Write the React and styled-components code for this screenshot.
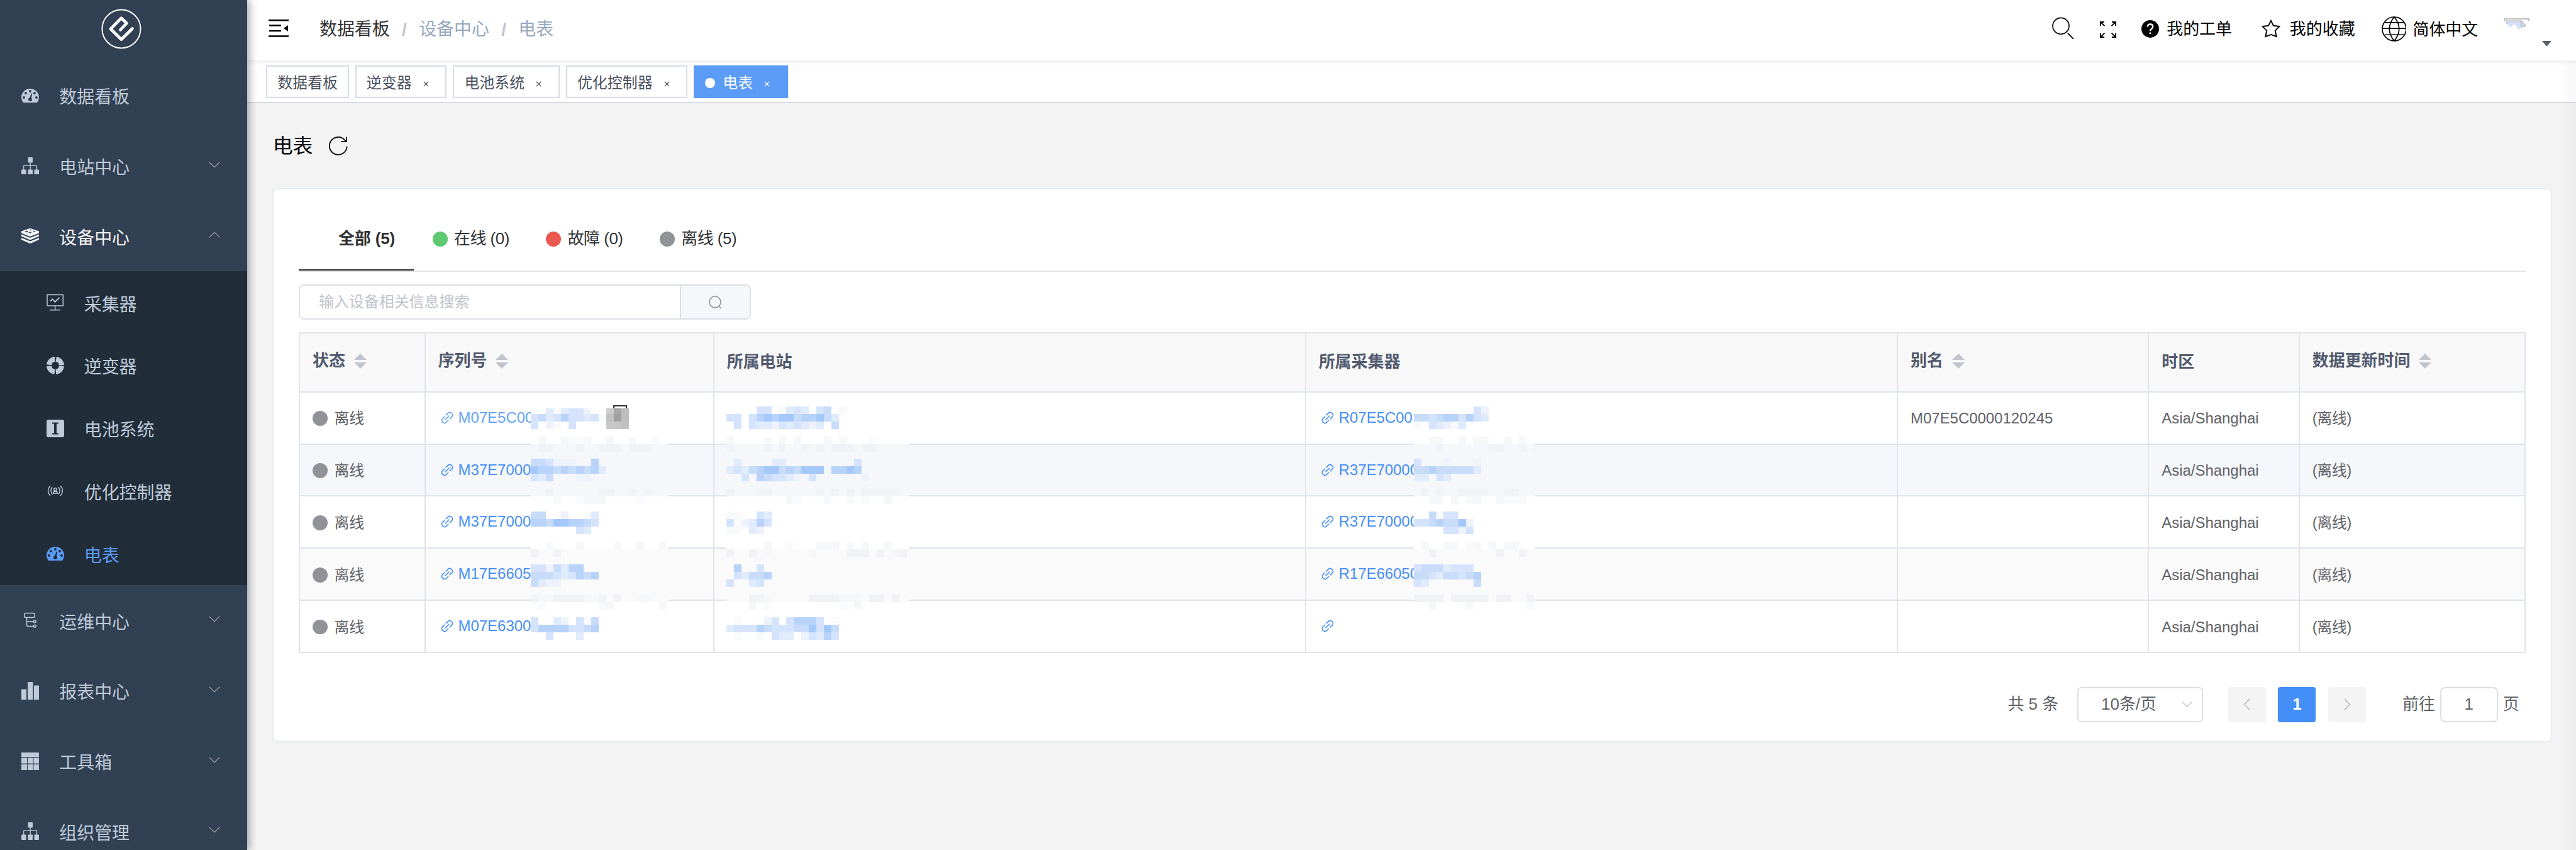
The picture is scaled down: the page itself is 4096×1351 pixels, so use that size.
import React from 'react';
import styled, { createGlobalStyle, css } from 'styled-components';

const SCALE = 4096 / 4104;
const r = (n) => `${(n * SCALE).toFixed(3)}px`;

const GlobalStyle = createGlobalStyle`
  *, *::before, *::after { box-sizing: border-box; }
  html, body { margin: 0; padding: 0; }
  body {
    background: #f3f3f3;
    font-family: "Liberation Sans", "Noto Sans CJK SC", sans-serif;
    color: #606266;
    overflow: hidden;
  }
`;

/* ---------- shell ---------- */
const Shell = styled.div`
  position: relative;
  display: flex;
  width: 100vw;
  height: 100vh;
  overflow: hidden;
  background: #f3f3f3;
`;
const EdgeShade = styled.div`
  position: absolute;
  top: 0;
  right: 0;
  width: 28px;
  height: 100%;
  pointer-events: none;
  background: linear-gradient(to right, rgba(0, 0, 0, 0), rgba(0, 0, 0, 0.03));
`;
const Main = styled.main`
  flex: 1;
  min-width: 0;
  display: flex;
  flex-direction: column;
`;

/* ---------- sidebar ---------- */
const Sidebar = styled.aside`
  position: relative;
  z-index: 2;
  flex: none;
  width: ${r(394)};
  height: 100%;
  overflow: visible;
  background: #324054;
  box-shadow: 4px 0 12px rgba(0, 21, 41, 0.35);
`;
const LogoBox = styled.div`
  height: ${r(96)};
  display: flex;
  justify-content: center;
  padding: ${r(14)} ${r(7)} 0 0;
`;
const MenuItem = styled.div`
  display: flex;
  align-items: center;
  height: ${(p) => (p.$sub ? r(100) : r(112))};
  padding: 0 ${r(43)} 0 ${(p) => (p.$sub ? r(74) : r(34))};
  color: ${(p) => p.$color || '#bfcbd9'};
  font-size: ${r(28)};
  white-space: nowrap;
`;
const MenuIcon = styled.span`
  display: flex;
  flex: none;
  width: ${r(28)};
  height: ${r(28)};
  margin-right: ${(p) => (p.$sub ? r(32) : r(32.5))};
`;
const MenuLabel = styled.span`
  flex: 1;
  padding-top: ${r(7)};
  line-height: 1;
`;
const SubMenu = styled.div`
  background: #222d3a;
`;
const Chevron = styled.svg`
  flex: none;
  width: ${r(18)};
  height: ${r(10)};
  margin-top: ${r(-4)};
  transform: ${(p) => (p.$up ? 'rotate(180deg)' : 'none')};
`;

/* ---------- navbar ---------- */
const Navbar = styled.header`
  position: relative;
  z-index: 1;
  flex: none;
  display: flex;
  align-items: flex-start;
  height: ${r(96)};
  padding-left: ${r(34)};
  background: #fff;
  box-shadow: 0 2px 8px rgba(0, 21, 41, 0.08);
`;
const Hamburger = styled.svg`
  flex: none;
  width: ${r(32)};
  height: ${r(28)};
  margin-top: ${r(31)};
`;
const Breadcrumb = styled.nav`
  flex: 1;
  display: flex;
  align-items: center;
  height: ${r(94)};
  margin-left: ${r(49)};
  font-size: ${r(28)};
  line-height: 1;
`;
const Crumb = styled.span`
  color: ${(p) => (p.$root ? '#303133' : '#97a8be')};
`;
const CrumbSlash = styled.span`
  width: ${r(46.5)};
  text-align: center;
  font-weight: 700;
  color: #c0c4cc;
`;
const NavTools = styled.div`
  flex: none;
  display: flex;
  align-items: flex-start;
  width: ${r(835)};
  color: #000;
  font-size: ${r(26)};
  line-height: 1;
`;
const ToolIcon = styled.svg`
  flex: none;
  display: block;
  width: ${(p) => r(p.$w)};
  height: ${(p) => r(p.$h)};
  margin: ${(p) => r(p.$top)} 0 0 ${(p) => r(p.$left || 0)};
`;
const ToolText = styled.span`
  flex: none;
  width: ${r(104)};
  white-space: nowrap;
  margin: ${(p) => r(p.$top)} 0 0 ${(p) => r(p.$left)};
`;

/* ---------- opened page tags ---------- */
const TagBar = styled.div`
  flex: none;
  display: flex;
  gap: ${r(10)};
  height: ${r(68)};
  padding: ${r(8)} 0 0 ${r(30)};
  background: #fff;
  border-bottom: 2px solid #d8dce5;
`;
const Tag = styled.div`
  display: flex;
  align-items: center;
  height: ${r(52)};
  padding: 0 ${(p) => (p.$closable ? r(27) : r(16))} 0 ${r(16)};
  border: 2px solid ${(p) => (p.$active ? '#5a9cf8' : '#d8dce5')};
  background: ${(p) => (p.$active ? '#5a9cf8' : '#fff')};
  color: ${(p) => (p.$active ? '#fff' : '#495060')};
  font-size: ${r(24)};
  line-height: 1;
  white-space: nowrap;
`;
const TagDot = styled.i`
  width: ${r(16)};
  height: ${r(16)};
  margin: ${r(4)} ${r(12)} 0 0;
  border-radius: 50%;
  background: #fff;
`;
const TagLabel = styled.span`
  padding-top: ${r(4)};
`;
const TagClose = styled.svg`
  width: ${r(9)};
  height: ${r(9)};
  margin: ${r(7)} 0 0 ${r(18)};
`;

/* ---------- page ---------- */
const TitleRow = styled.div`
  display: flex;
  align-items: flex-start;
  height: ${r(136)};
  padding: ${r(53)} 0 0 ${r(40.5)};
`;
const Title = styled.h1`
  margin: 0;
  font-size: ${r(32)};
  line-height: 1;
  font-weight: 400;
  color: #000;
  width: ${r(64)};
`;
const Card = styled.section`
  width: ${r(3632)};
  height: ${r(882)};
  margin-left: ${r(40)};
  padding: ${r(30)} ${r(40)};
  border: 2px solid #e6ebf3;
  border-radius: 8px;
  background: #fff;
`;
const Tabs = styled.div`
  display: flex;
  gap: ${r(2)};
  height: ${r(101)};
  border-bottom: 2px solid #e4e4e4;
`;
const Tab = styled.div`
  display: flex;
  align-items: center;
  width: ${(p) => (p.$active ? r(183) : r(179))};
  padding-left: ${(p) => (p.$active ? r(63) : r(28))};
  border-bottom: 2px solid ${(p) => (p.$active ? '#303133' : 'transparent')};
  color: #303133;
  font-size: ${r(26)};
  font-weight: ${(p) => (p.$active ? 700 : 400)};
  letter-spacing: ${(p) => (p.$active ? '-0.1px' : '-0.5px')};
  line-height: 1;
  white-space: nowrap;
`;
const Dot = styled.i`
  flex: none;
  width: ${r(24)};
  height: ${r(24)};
  margin-right: ${r(10.5)};
  border-radius: 50%;
  background: ${(p) => p.$color};
`;
const SearchBox = styled.div`
  display: flex;
  width: ${r(720)};
  height: ${r(56)};
  margin-top: ${r(20)};
  border: 2px solid #dcdfe6;
  border-radius: 8px;
  overflow: hidden;
`;
const SearchInput = styled.div`
  flex: 1;
  display: flex;
  align-items: center;
  padding-left: ${r(30)};
  color: #c0c4cc;
  font-size: ${r(24)};
  line-height: 1;
`;
const SearchButton = styled.div`
  display: flex;
  align-items: center;
  justify-content: center;
  width: ${r(111)};
  border-left: 2px solid #dcdfe6;
  background: #f5f7fa;
`;

/* ---------- table ---------- */
const lineColor = '#dfe4ec';
const Table = styled.div`
  margin-top: ${r(20)};
  border-top: 2px solid ${lineColor};
  border-left: 2px solid ${lineColor};
`;
const rowGrid = css`
  display: grid;
  grid-template-columns: ${[200, 460, 943, 943, 400, 240, 360].map(r).join(' ')};
`;
const HeadRow = styled.div`
  ${rowGrid}
  height: ${r(94)};
  background: #f8f8f9;
`;
const HeadCell = styled.div`
  display: flex;
  align-items: center;
  padding: 0 0 ${(p) => (p.$sortable ? r(4) : '0px')} ${r(20)};
  border-right: 2px solid ${lineColor};
  border-bottom: 2px solid ${lineColor};
  color: #515a6e;
  font-size: ${r(26)};
  font-weight: 700;
  line-height: 1;
  white-space: nowrap;
`;
const SortIcon = styled.svg`
  width: ${r(20)};
  height: ${r(24)};
  margin-left: ${r(14)};
`;
const Body = styled.div`
  position: relative;
`;
const Row = styled.div`
  ${rowGrid}
  height: ${r(83)};
  background: ${(p) => p.$bg};
`;
const Cell = styled.div`
  display: flex;
  align-items: center;
  min-width: 0;
  padding: ${r(2)} 0 0 ${r(20)};
  border-right: 2px solid ${lineColor};
  border-bottom: 2px solid ${lineColor};
  color: #606266;
  font-size: ${r(24)};
  line-height: ${r(30)};
  letter-spacing: ${(p) => (p.$tight ? '-0.5px' : 'normal')};
  white-space: nowrap;
`;
const LinkCell = styled(Cell)`
  padding: 0 0 ${r(1)} ${r(24)};
  color: ${(p) => (p.$hover ? '#62a3f8' : '#448ef7')};
`;
const LinkText = styled.span`
  margin-left: ${r(8)};
`;
const MosaicLayer = styled.div`
  position: absolute;
  left: ${(p) => r(p.$left)};
  top: ${(p) => r(22 + p.$trim)};
  display: grid;
  grid-template-columns: repeat(${(p) => p.$cols}, ${r(12)});
  grid-template-rows: ${(p) => r(12 - p.$trim)};
  grid-auto-rows: ${r(12)};
  width: ${(p) => r(p.$width)};
  overflow: hidden;
`;
const Tile = styled.i`
  background: ${(p) => p.$color};
`;
const CopyHandle = styled.div`
  position: absolute;
  left: ${r(499)};
  top: ${r(20)};
  width: ${r(22)};
  height: ${r(5)};
  border: 2px solid #303133;
  border-bottom: 0;
`;

/* ---------- pagination ---------- */
const Pagination = styled.div`
  display: flex;
  align-items: center;
  justify-content: flex-end;
  height: ${r(56)};
  margin-top: ${r(54)};
  padding-right: ${r(10.5)};
  font-size: ${r(26)};
  line-height: 1;
  color: #606266;
  white-space: nowrap;
`;
const PageSize = styled.div`
  display: flex;
  align-items: center;
  justify-content: space-between;
  width: ${r(200)};
  height: ${r(56)};
  margin: 0 ${r(40)} 0 ${r(30)};
  padding: 0 ${r(15)} 0 ${r(36)};
  border: 2px solid #dcdfe6;
  border-radius: 6px;
`;
const PageButton = styled.div`
  display: flex;
  align-items: center;
  justify-content: center;
  width: ${r(60)};
  height: ${r(56)};
  margin-right: ${(p) => (p.$last ? r(58) : r(20))};
  border-radius: 4px;
  background: ${(p) => (p.$active ? '#448ef7' : '#f4f4f5')};
  color: #fff;
  font-weight: 700;
`;
const PageInput = styled.div`
  display: flex;
  align-items: center;
  justify-content: center;
  width: ${r(92)};
  height: ${r(56)};
  margin: 0 ${r(8)};
  border: 2px solid #dcdfe6;
  border-radius: 8px;
`;

/* ---------- icons (28-unit boxes) ---------- */
const Svg28 = ({ children }) => (
  <svg viewBox="0 0 28 28" width="100%" height="100%" fill="none">{children}</svg>
);
const Gauge = ({ hole }) => (
  <Svg28>
    <path d="M2.6 24.6Q0 20.500 0 17A14 14 0 0 1 28 17Q28 20.500 25.400 24.600Q25 25 24.500 25H3.500Q3 25 2.600 24.600Z" fill="currentColor" />
    <g fill={hole}>
      <circle cx="14" cy="7" r="2" />
      <circle cx="7" cy="10" r="2" />
      <circle cx="21" cy="10" r="2" />
      <circle cx="4" cy="17" r="2" />
      <circle cx="24" cy="17" r="2" />
      <circle cx="14" cy="20" r="3" />
      <path d="M12.800 18.500L15.800 10.500L17.300 11L15.600 19Z" />
    </g>
  </Svg28>
);
const Sitemap = () => (
  <Svg28>
    <g fill="currentColor">
      <rect x="10.500" y="0" width="7.500" height="8.500" rx="1" />
      <rect x="0" y="19.500" width="7.500" height="8.500" rx="1" />
      <rect x="10.500" y="19.500" width="7.500" height="8.500" rx="1" />
      <rect x="20.500" y="19.500" width="7.500" height="8.500" rx="1" />
    </g>
    <path d="M14.200 8V20M3.700 20V13.500H24.500V20" stroke="currentColor" strokeWidth="1.300" />
  </Svg28>
);
const Stack = ({ hole }) => (
  <Svg28>
    <g fill="currentColor">
      <path d="M0 6.500L12.500 2.200Q14 1.700 15.500 2.200L28 6.500V9.500L15.500 14.600Q14 15.200 12.500 14.600L0 9.500Z" />
      <path d="M0 11.500L12.500 16.600Q14 17.200 15.500 16.600L28 11.500V14.600L15.500 19.800Q14 20.400 12.500 19.800L0 14.600Z" />
      <path d="M0 17L12.500 22Q14 22.600 15.500 22L28 17V20L15.500 25.500Q14 26.200 12.500 25.500L0 20Z" />
    </g>
    <g fill={hole}>
      <path d="M10.500 8.200L14.500 9.800L17 7.500L13 8.300ZM12.500 3.800L14 4.200L15.500 3.600L16 5L14 5.600Z" />
      <ellipse cx="8.500" cy="7.200" rx="2.800" ry="1" />
      <path d="M18.500 6.500L23 5.700L20.500 8Z" />
    </g>
  </Svg28>
);
const Monitor = () => (
  <Svg28>
    <g stroke="currentColor" strokeWidth="1.500">
      <path d="M1 1.500H26.300V19H1ZM13.700 19V25M5 25.700H22" />
      <path d="M6 11.500L9.500 8.500L13.500 13L20.500 6" strokeWidth="1.800" />
    </g>
  </Svg28>
);
const Ring = () => (
  <Svg28>
    <circle cx="14" cy="14" r="10" stroke="currentColor" strokeWidth="8" strokeDasharray="13.700 2.008" strokeDashoffset="-1" />
  </Svg28>
);
const BatteryBox = ({ hole }) => (
  <Svg28>
    <rect width="28" height="28" rx="3" fill="currentColor" />
    <path d="M9 4.500H19V6.500H16V21.500H19V23.500H9V21.500H12V6.500H9Z" fill={hole} />
  </Svg28>
);
const Signal = () => (
  <Svg28>
    <g stroke="currentColor" strokeWidth="1.400" strokeLinecap="round">
      <path d="M5.500 6.500Q-0.500 14 5.500 21.500M8.800 8.500Q5 14 8.800 19.500M22.500 6.500Q28.500 14 22.500 21.500M19.200 8.500Q23 14 19.200 19.500" />
      <circle cx="14" cy="12" r="2.200" />
      <path d="M10.500 18Q11 14.800 14 14.800Q17 14.800 17.500 18Z" />
    </g>
  </Svg28>
);
const Flow = () => (
  <Svg28>
    <g stroke="currentColor" strokeWidth="1.500">
      <rect x="4.700" y="2.500" width="16.500" height="7" rx="2.500" />
      <path d="M8.500 9.500V21Q8.500 23.500 11 23.500H19M8.500 15.800H19" />
      <circle cx="21.300" cy="15.800" r="1.900" />
      <circle cx="21.300" cy="23.200" r="1.900" />
    </g>
  </Svg28>
);
const Bars = () => (
  <Svg28>
    <path d="M0 11.500H8V28H0ZM10 0H18.300V28H10ZM20 5.500H28V28H20Z" fill="currentColor" />
  </Svg28>
);
const GridIcon = () => (
  <Svg28>
    <path d="M0 0H28V7H0ZM0 8.300H9V17.500H0ZM10 8.300H18.500V17.500H10ZM19.500 8.300H28V17.500H19.500ZM0 18.800H9V28H0ZM10 18.800H18.500V28H10ZM19.500 18.800H28V28H19.500Z" fill="currentColor" />
  </Svg28>
);
const Logo = styled.svg`
  width: ${r(64)};
  height: ${r(64)};
`;
const LinkIcon = styled.svg`
  flex: none;
  width: ${r(20)};
  height: ${r(20)};
`;
const SmallIcon = styled.svg`
  flex: none;
  width: ${(p) => r(p.$w)};
  height: ${(p) => r(p.$h)};
`;
const RefreshIcon = styled.svg`
  width: ${r(30)};
  height: ${r(30)};
  margin-left: ${r(25.5)};
`;

const Arrow = ({ up }) => (
  <Chevron viewBox="0 0 18 10" $up={up}>
    <path d="M0.700 0.700L9 8.800L17.300 0.700" fill="none" stroke="#909399" strokeWidth="1.500" />
  </Chevron>
);
const ChainLink = () => (
  <LinkIcon viewBox="0 0 20 20" fill="none" stroke="currentColor" strokeWidth="1.600" strokeLinecap="round">
    <path d="M7 13L13 7M8.300 5.700L11.600 2.400Q14 0 17 2.800Q20 6 17.600 8.400L14.300 11.700M11.700 14.300L8.400 17.600Q6 20 3 17.200Q0 14 2.400 11.600L5.700 8.300" />
  </LinkIcon>
);

/* ---------- data ---------- */
const MAIN_BG = '#324054';
const SUB_BG = '#222d3a';

const menuTop = [
  { label: '数据看板', icon: <Gauge hole={MAIN_BG} /> },
  { label: '电站中心', icon: <Sitemap />, arrow: 'down' },
  { label: '设备中心', icon: <Stack hole={MAIN_BG} />, arrow: 'up', color: '#f4f4f5' },
];
const subMenu = [
  { label: '采集器', icon: <Monitor /> },
  { label: '逆变器', icon: <Ring /> },
  { label: '电池系统', icon: <BatteryBox hole={SUB_BG} /> },
  { label: '优化控制器', icon: <Signal /> },
  { label: '电表', icon: <Gauge hole={SUB_BG} />, color: '#5a9cf8' },
];
const menuBottom = [
  { label: '运维中心', icon: <Flow />, arrow: 'down' },
  { label: '报表中心', icon: <Bars />, arrow: 'down' },
  { label: '工具箱', icon: <GridIcon />, arrow: 'down' },
  { label: '组织管理', icon: <Sitemap />, arrow: 'down' },
];
const tags = ['数据看板', '逆变器', '电池系统', '优化控制器', '电表'];
const tabs = [
  { label: '全部 (5)' },
  { label: '在线 (0)', color: '#5fc971' },
  { label: '故障 (0)', color: '#ea5850' },
  { label: '离线 (5)', color: '#929399' },
];
const columns = [
  ['状态', true], ['序列号', true], ['所属电站', false], ['所属采集器', false],
  ['别名', true], ['时区', false], ['数据更新时间', true],
];
const rows = [
  { sn: 'M07E5C00', collector: 'R07E5C00', alias: 'M07E5C0000120245', bg: '#ffffff', hover: true },
  { sn: 'M37E7000', collector: 'R37E70000', bg: '#f5f7fb' },
  { sn: 'M37E7000', collector: 'R37E70000', bg: '#ffffff' },
  { sn: 'M17E6605', collector: 'R17E66050', bg: '#fafafa' },
  { sn: 'M07E6300', collector: '', bg: '#ffffff' },
];

const palette = {
  a: '#a5c8fa', b: '#b8d3fa', c: '#c8dcfa', d: '#d5e4fc', e: '#e0ebfb', f: '#edf2fb',
  g: '#f8fafc', 1: '#f6f7f9', 2: '#f1f2f5',
  p: '#cccccc', q: '#a7a7a7', s: '#bebebe', t: '#c0c2c2', u: '#a0a0a0', v: '#c7c7c7',
};
/* twelve-pixel tile lines that belong to each table row start at these indexes */
const rowStarts = [0, 5, 12, 19, 26];
const tileBase = (y) => rows[rowStarts.filter((s) => s <= y).length - 1].bg;

const mosaics = [
  {
    left: 368, width: 218, cols: 19, trim: 3,
    lines: {
      0: '..egeddf..pqs', 1: 'dcedbddedgtus', 2: 'd.fg.d....vvt',
      4: '.1..1gg1..1..1..g', 5: '.22...2..2221222', 7: 'ccdfff..b', 8: 'abbcbcbcbe', 9: 'dec...ff',
      11: '..2......22..2.21', 12: '...g..g111....g', 14: 'cc..f..ge', 15: 'bbcaabbcd', 16: '......de',
      18: '..1...1....1..1..1', 19: '2..2', 21: 'ddfcebb', 22: 'cccdedbcb', 23: 'ceff',
      25: '2112222112.2..11', 26: '.g.......11......1', 28: 'd..ef.dgc', 29: 'dbbbbddcb', 30: '..d...e',
    },
  },
  {
    left: 679, width: 291, cols: 25, trim: 0,
    lines: {
      0: '....dd.gede.dc.g', 1: 'dd.dbabaacbbace', 2: '.d.deefdedefe.c',
      4: '1....1.1.1...1.1...g', 5: '2....2.2..2.2.222.22...1', 7: '.e....ee.........d',
      8: 'edecbaacbcaaa.bbab', 9: '..d.bcddef.d......f', 11: '2...22..1...2.2.2.22222',
      12: '........1g...1..g.g..1', 14: 'gg..de', 15: 'dgfebd', 16: 'gg.ef', 18: '.....1..g...111.1.1..1',
      19: '2..2.1.....1....222.2.12', 21: '.b..d', 22: '.deccb', 23: 'd..ed',
      25: '...221.....2222111.22.2', 26: '...1.g.........g.1', 28: '.g...fd.dbbbd.g', 29: 'edddbcdddccadac',
      30: '.g..g.dee.fdebd',
    },
  },
  {
    left: 1774, width: 194, cols: 17, trim: 0,
    lines: {
      0: '........df', 1: 'ccdcbbdbde', 2: 'g.defge', 4: '..11..1.11..1.1', 5: '...2......22..2.2', 7: 'd...f...2',
      8: 'ccbccccce', 9: 'ee.de', 11: '.2.2..2222..22', 12: '..11.1.g1..1ggg', 14: '..cgdd', 15: 'ddcbccaf', 16: '....ddfd',
      18: '.1..11.g1.1.11', 19: '..2........2..2', 21: 'dccceddde'.slice(0, 8), 22: 'ccdeccdcb', 23: 'de......c',
      25: '2222.22222.22..2', 26: '..1....1.......g',
    },
  },
];

const Menu = ({ items, sub }) => items.map((m) => (
  <MenuItem key={m.label} $sub={sub} $color={m.color}>
    <MenuIcon $sub={sub}>{m.icon}</MenuIcon>
    <MenuLabel>{m.label}</MenuLabel>
    {m.arrow && <Arrow up={m.arrow === 'up'} />}
  </MenuItem>
));

const Mosaic = ({ left, width, cols, trim, lines }) => (
  <MosaicLayer $left={left} $width={width} $cols={cols} $trim={trim}>
    {Array.from({ length: 31 * cols }, (_, i) => {
      const y = Math.floor(i / cols);
      const ch = (lines[y] || '')[i % cols];
      return <Tile key={i} $color={palette[ch] || tileBase(y)} />;
    })}
  </MosaicLayer>
);

export default function App() {
  return (
    <>
      <GlobalStyle />
      <Shell>
        <Sidebar>
          <LogoBox>
            <Logo viewBox="0 0 64 64" fill="none" stroke="#fff">
              <circle cx="32" cy="32" r="30.600" strokeWidth="2" />
              <path d="M30.500 33.500L40.500 23L32 14.800L15 32L32 48.800L49.500 31.500" strokeWidth="4.800" strokeLinecap="round" strokeLinejoin="round" />
            </Logo>
          </LogoBox>
          <Menu items={menuTop} />
          <SubMenu><Menu items={subMenu} sub /></SubMenu>
          <Menu items={menuBottom} />
        </Sidebar>

        <Main>
          <Navbar>
            <Hamburger viewBox="0 0 32 28">
              <path d="M0 1.300H32M1 9.500H20M1 18.200H20M0 26.500H32" stroke="#000" strokeWidth="2.400" />
              <path d="M24 14L31 9V19Z" />
            </Hamburger>
            <Breadcrumb>
              <Crumb $root>数据看板</Crumb>
              <CrumbSlash>/</CrumbSlash>
              <Crumb>设备中心</Crumb>
              <CrumbSlash>/</CrumbSlash>
              <Crumb>电表</Crumb>
            </Breadcrumb>
            <NavTools>
              <ToolIcon $w={35} $h={36} $top={27} viewBox="0 0 35 36" fill="none" stroke="#000" strokeWidth="1.700">
                <circle cx="14" cy="14.300" r="13" />
                <path d="M25 26L34 35" />
              </ToolIcon>
              <ToolIcon $w={26} $h={26} $top={34} $left={42} viewBox="0 0 26 26" fill="none" stroke="#000">
                <path d="M1 7V1H7M19 1H25V7M25 19V25H19M7 25H1V19" strokeWidth="2" />
                <path d="M1 1L7.500 7.500M25 1L18.500 7.500M25 25L18.500 18.500M1 25L7.500 18.500" strokeWidth="1.800" />
              </ToolIcon>
              <ToolIcon $w={28} $h={28} $top={32} $left={40} viewBox="0 0 28 28" fill="none">
                <circle cx="14" cy="14" r="14" fill="#000" />
                <path d="M9.800 10.500Q10 6.500 14 6.500Q18.200 6.500 18.200 10.300Q18.200 12.300 16 13.700Q14 15 14 17.500" stroke="#fff" strokeWidth="2.400" />
                <circle cx="14" cy="20.800" r="1.600" fill="#fff" />
              </ToolIcon>
              <ToolText $top={34} $left={12}>我的工单</ToolText>
              <ToolIcon $w={30} $h={29} $top={31} $left={47} viewBox="0 0 30 29" fill="none" stroke="#000" strokeWidth="1.900">
                <path d="M15 1.800L18.900 9.800L28.500 11L21.700 17.800L23.800 27.300L15 24L6.200 27.300L8.300 17.800L1.500 11L11.100 9.800Z" />
              </ToolIcon>
              <ToolText $top={34} $left={15}>我的收藏</ToolText>
              <ToolIcon $w={40} $h={40} $top={26} $left={42} viewBox="0 0 40 40" fill="none" stroke="#000" strokeWidth="1.700">
                <circle cx="20" cy="20" r="19" />
                <path d="M20 1Q4.500 20 20 39Q35.500 20 20 1M1 19.300H39M4.500 9.800H35.500M4.500 29.300H35.500" />
              </ToolIcon>
              <ToolText $top={35} $left={10}>简体中文</ToolText>
              <ToolIcon $w={40} $h={18} $top={29} $left={42} viewBox="0 0 40 18" fill="none">
                <path d="M0 1H40M1 1V5M39 1V5" stroke="#bdbdbd" strokeWidth="2" />
                <path d="M4 4H27L34 12Q28 17 21 17Q20 11 16 10.500Q12 11 11 15Q5 12 4 8Z" fill="#d5e1f8" />
                <path d="M4 9V4H27L34 12.500H26.500V4.500" stroke="#a8a8a8" strokeWidth="1.200" />
              </ToolIcon>
              <ToolIcon $w={15} $h={9} $top={65} $left={20} viewBox="0 0 15 9">
                <path d="M0 0H15L7.500 9Z" fill="#5a5e66" />
              </ToolIcon>
            </NavTools>
          </Navbar>

          <TagBar>
            {tags.map((t, i) => (
              <Tag key={t} $closable={i > 0} $active={i === 4}>
                {i === 4 && <TagDot />}
                <TagLabel>{t}</TagLabel>
                {i > 0 && (
                  <TagClose viewBox="0 0 9 9">
                    <path d="M0.800 0.800L8.200 8.200M8.200 0.800L0.800 8.200" stroke="currentColor" strokeWidth="1.200" />
                  </TagClose>
                )}
              </Tag>
            ))}
          </TagBar>

          <TitleRow>
            <Title>电表</Title>
            <RefreshIcon viewBox="0 0 30 30" fill="none" stroke="#000" strokeWidth="1.800">
              <path d="M28.800 15.500A14 14 0 1 1 24.500 4.800L28 8.200M28 0.500V8.200H19.500" />
            </RefreshIcon>
          </TitleRow>

          <Card>
            <Tabs>
              {tabs.map((t, i) => (
                <Tab key={t.label} $active={i === 0}>
                  {t.color && <Dot $color={t.color} />}
                  {t.label}
                </Tab>
              ))}
            </Tabs>
            <SearchBox>
              <SearchInput>输入设备相关信息搜索</SearchInput>
              <SearchButton>
                <SmallIcon $w={21} $h={21} viewBox="0 0 21 21" fill="none" stroke="#909399" strokeWidth="1.600">
                  <circle cx="10" cy="10" r="9" />
                  <path d="M16 16.500L20.200 20.500" />
                </SmallIcon>
              </SearchButton>
            </SearchBox>

            <Table>
              <HeadRow>
                {columns.map(([label, sortable]) => (
                  <HeadCell key={label} $sortable={sortable}>
                    {label}
                    {sortable && (
                      <SortIcon viewBox="0 0 20 24" fill="#c0c4cc">
                        <path d="M10 0L20 10H0ZM0 14H20L10 24Z" />
                      </SortIcon>
                    )}
                  </HeadCell>
                ))}
              </HeadRow>
              <Body>
                {rows.map((row, i) => (
                  <Row key={i} $bg={row.bg}>
                    <Cell><Dot $color="#929399" />离线</Cell>
                    <LinkCell $hover={row.hover}><ChainLink /><LinkText>{row.sn}</LinkText></LinkCell>
                    <Cell />
                    <LinkCell><ChainLink /><LinkText>{row.collector}</LinkText></LinkCell>
                    <Cell>{row.alias}</Cell>
                    <Cell>Asia/Shanghai</Cell>
                    <Cell $tight>(离线)</Cell>
                  </Row>
                ))}
                {mosaics.map((m) => <Mosaic key={m.left} {...m} />)}
                <CopyHandle />
              </Body>
            </Table>

            <Pagination>
              <span>共 5 条</span>
              <PageSize>
                <span>10条/页</span>
                <SmallIcon $w={17} $h={9} viewBox="0 0 17 9" fill="none" stroke="#c0c4cc" strokeWidth="1.500">
                  <path d="M0.700 0.700L8.500 8.200L16.300 0.700" />
                </SmallIcon>
              </PageSize>
              <PageButton>
                <SmallIcon $w={11} $h={19} viewBox="0 0 11 19" fill="none" stroke="#c0c4cc" strokeWidth="1.900">
                  <path d="M10 1L1.500 9.500L10 18" />
                </SmallIcon>
              </PageButton>
              <PageButton $active>1</PageButton>
              <PageButton $last>
                <SmallIcon $w={11} $h={19} viewBox="0 0 11 19" fill="none" stroke="#c0c4cc" strokeWidth="1.900">
                  <path d="M1 1L9.500 9.500L1 18" />
                </SmallIcon>
              </PageButton>
              <span>前往</span>
              <PageInput>1</PageInput>
              <span>页</span>
            </Pagination>
          </Card>
        </Main>
        <EdgeShade />
      </Shell>
    </>
  );
}
